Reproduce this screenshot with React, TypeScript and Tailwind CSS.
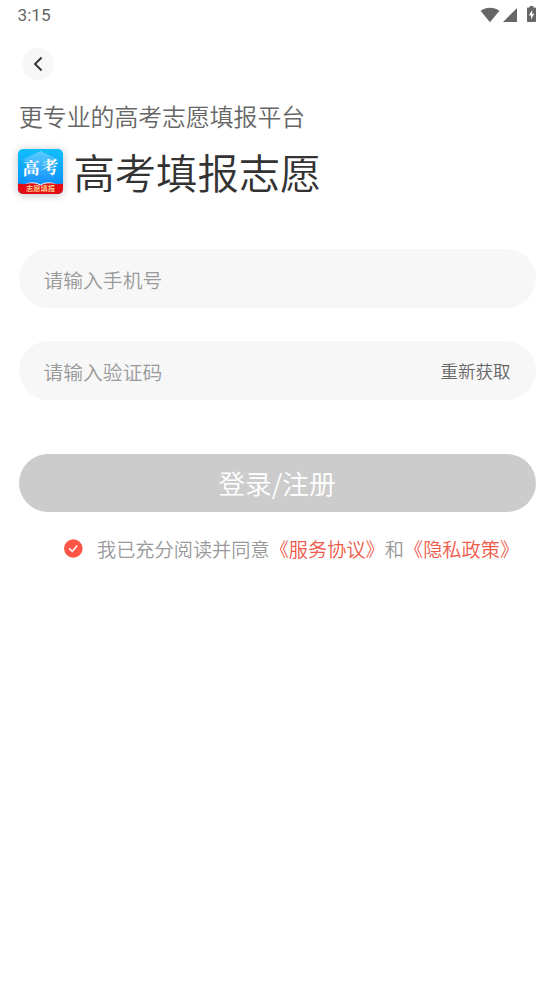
import React, { useState } from "react";

const StatusBar = () => {
  return (
    <div className="flex h-[30px] items-center justify-between pl-[17.5px] pr-[18px] text-[#666]">
      <span className="font-['Roboto',sans-serif] text-[17.2px] font-[450] leading-[31px]">
        3:15
      </span>
      <div className="flex items-center">
        <svg width="20" height="16" viewBox="0 0 20 16" fill="currentColor">
          <path d="M0.6 3.8C6 -0.4 14 -0.4 19.4 3.8L10 15.2Z" />
        </svg>
        <svg className="ml-[3px]" width="14" height="14" viewBox="0 0 14 14" fill="currentColor">
          <path d="M14 0V14H0Z" />
        </svg>
        <svg className="-mt-0.5 ml-2.5" width="9" height="16" viewBox="0 0 9 16" fill="currentColor">
          <path d="M2.7 0H6.3V1.6H8.2Q9 1.6 9 2.4V15.2Q9 16 8.2 16H0.8Q0 16 0 15.2V2.4Q0 1.6 0.8 1.6H2.7Z" />
          <path d="M5.2 4L1.8 9.4H4V13.4L7.2 7.8H5.2Z" fill="#fff" />
        </svg>
      </div>
    </div>
  );
};

const AppLogo = () => {
  return (
    <svg
      className="mt-px rounded-[5px] shadow-[0_1px_8px_rgba(0,0,0,0.25)]"
      width="45"
      height="45"
      viewBox="0 0 45 45"
    >
      <defs>
        <linearGradient id="sky" x1="0" y1="0" x2="0" y2="1">
          <stop offset="0" stopColor="#10c0fb" />
          <stop offset="1" stopColor="#0a86fb" />
        </linearGradient>
        <linearGradient id="cap" x1="0" y1="0" x2="0" y2="1">
          <stop offset="0" stopColor="#74d2ff" />
          <stop offset="1" stopColor="#1490fc" />
        </linearGradient>
      </defs>
      <rect width="45" height="45" fill="url(#sky)" />
      <path d="M4 11L22.5 2L41 11L37 12.5V34H8V12.5Z" fill="url(#cap)" opacity="0.75" />
      <path d="M8 34.6Q16 31.5 22.5 35.5Q29 31.5 37 34.6V37H8Z" fill="#d9f1ff" />
      <path d="M0 34.8Q4 34.4 6 35.2Q16 32.6 22.5 36.4Q29 32.6 39 35.2Q41 34.4 45 34.8V45H0Z" fill="#e50b12" />
      <g
        fill="#fff"
        fontWeight="700"
        fontFamily="'Noto Serif CJK SC', 'Noto Sans CJK SC', serif"
      >
        <text fontSize="17" transform="translate(4.4 26) rotate(-3) skewX(-4)">
          高
        </text>
        <text fontSize="17.5" transform="translate(23.2 25.4) rotate(-5) skewX(-4)">
          考
        </text>
      </g>
      <text
        x="22.5"
        y="42.2"
        textAnchor="middle"
        fill="#ffdf9c"
        fontSize="7.3"
        fontWeight="500"
        fontFamily="'Noto Sans CJK SC', sans-serif"
      >
        志愿填报
      </text>
    </svg>
  );
};

const App = () => {
  const [phone, setPhone] = useState("");
  const [code, setCode] = useState("");
  const [agreed, setAgreed] = useState(true);

  return (
    <main
      lang="zh-CN"
      className="flex min-h-screen w-full flex-col bg-white font-['Noto_Sans_CJK_SC',sans-serif] font-[350]"
    >
      <StatusBar />

      <button
        aria-label="返回"
        className="ml-[22px] mt-[18px] flex size-8 items-center justify-center rounded-full bg-[#f7f7f7]"
      >
        <svg className="-ml-px" width="10" height="16" viewBox="0 0 10 16" fill="none" stroke="#333" strokeWidth="1.9">
          <path d="M8.6 1.5L2 8L8.6 14.5" />
        </svg>
      </button>

      <p className="ml-[19px] mt-[19px] text-[23.85px] leading-[34px] text-[#666]">
        更专业的高考志愿填报平台
      </p>

      <div className="ml-[18px] mt-2 flex h-[60px] items-center">
        <AppLogo />
        <h1 className="ml-[10.5px] text-[41.3px] font-[350] leading-[60px] text-[#333]">
          高考填报志愿
        </h1>
      </div>

      <form className="mt-12 flex flex-col px-[18.5px]">
        <input
          className="h-[59px] rounded-full bg-[#f7f7f7] px-[25px] pt-0.5 text-[19.8px] text-[#333] outline-none placeholder:text-[#999]"
          placeholder="请输入手机号"
          value={phone}
          onChange={(e) => setPhone(e.target.value)}
        />

        <div className="mt-[33px] flex h-[59px] items-center rounded-full bg-[#f7f7f7] px-[25px]">
          <input
            className="h-full min-w-0 flex-1 bg-transparent pt-0.5 text-[19.8px] text-[#333] outline-none placeholder:text-[#999]"
            placeholder="请输入验证码"
            value={code}
            onChange={(e) => setCode(e.target.value)}
          />
          <button type="button" className="pt-0.5 text-[17.5px] text-[#666]">
            重新获取
          </button>
        </div>

        <button
          type="button"
          className="mt-[53.5px] h-[58.5px] rounded-full bg-[#ccc] text-[26.7px] text-white"
        >
          登录/注册
        </button>
      </form>

      <div className="ml-16 mt-[22px] flex h-[30px] items-center whitespace-nowrap text-[19.2px] text-[#999]">
        <button aria-label="同意协议" className="-mt-0.5" onClick={() => setAgreed(!agreed)}>
          <svg width="19" height="19" viewBox="0 0 19 19" fill="none">
            <circle cx="9.3" cy="9.5" r="9.3" fill={agreed ? "#ff5546" : "#ccc"} />
            <path d="M5.2 9.4L8.3 12.5L13.2 6.5" stroke="#fff" strokeWidth="1.5" />
          </svg>
        </button>
        <p className="ml-[14px]">
          我已充分阅读并同意
          <span className="text-[#f05a4b]">《服务协议》</span>和
          <span className="text-[#f05a4b]">《隐私政策》</span>
        </p>
      </div>
    </main>
  );
};

export default App;
